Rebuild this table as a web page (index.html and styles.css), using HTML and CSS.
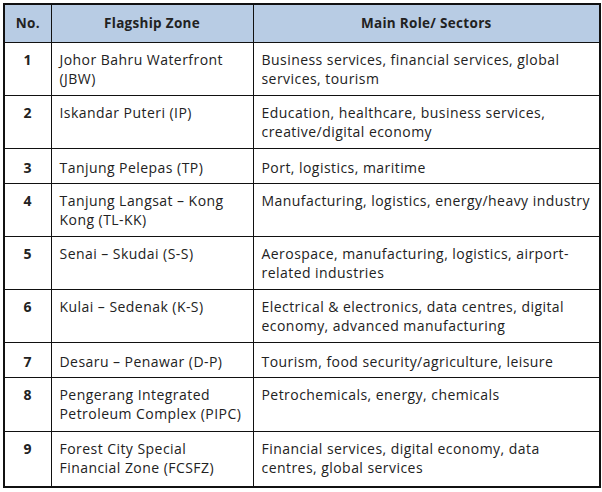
FILE: index.html
```html
<!DOCTYPE html>
<html lang="en">
<head>
<meta charset="utf-8">
<title>Flagship Zones</title>
<link rel="stylesheet" href="styles.css">
</head>
<body>
<table class="zones">
  <colgroup>
    <col class="c-no">
    <col class="c-zone">
    <col class="c-role">
  </colgroup>
  <thead>
    <tr>
      <th>No.</th>
      <th>Flagship Zone</th>
      <th>Main Role/ Sectors</th>
    </tr>
  </thead>
  <tbody>
    <tr><td class="no">1</td><td>Johor Bahru Waterfront (JBW)</td><td>Business services, financial services, global services, tourism</td></tr>
    <tr><td class="no">2</td><td>Iskandar Puteri (IP)</td><td>Education, healthcare, business services, creative/digital economy</td></tr>
    <tr class="one"><td class="no">3</td><td>Tanjung Pelepas (TP)</td><td>Port, logistics, maritime</td></tr>
    <tr><td class="no">4</td><td>Tanjung Langsat – Kong Kong (TL-KK)</td><td>Manufacturing, logistics, energy/heavy industry</td></tr>
    <tr><td class="no">5</td><td>Senai – Skudai (S-S)</td><td>Aerospace, manufacturing, logistics, airport-related industries</td></tr>
    <tr><td class="no">6</td><td>Kulai – Sedenak (K-S)</td><td>Electrical &amp; electronics, data centres, digital economy, advanced manufacturing</td></tr>
    <tr class="one"><td class="no">7</td><td>Desaru – Penawar (D-P)</td><td>Tourism, food security/agriculture, leisure</td></tr>
    <tr class="eight"><td class="no">8</td><td>Pengerang Integrated Petroleum Complex (PIPC)</td><td>Petrochemicals, energy, chemicals</td></tr>
    <tr class="last"><td class="no">9</td><td>Forest City Special Financial Zone (FCSFZ)</td><td>Financial services, digital economy, data centres, global services</td></tr>
  </tbody>
</table>
</body>
</html>
```

FILE: styles.css
```css
html, body {
  margin: 0;
  padding: 0;
  background: #ffffff;
}

body {
  padding: 3px 0 0 3px;
  font-family: "Open Sans", "DejaVu Sans", sans-serif;
  color: #222222;
}

.zones {
  border-collapse: collapse;
  width: 596px;
  table-layout: fixed;
  border: 2px solid #111;
  font-size: 14px;
  line-height: 19px;
  letter-spacing: 0.45px;
}

.c-no { width: 47px; }
.c-zone { width: 202px; }
.c-role { width: 347px; }

.zones th,
.zones td {
  border: 1px solid #111;
  padding: 7px 10px 7px 8px;
  text-align: left;
  vertical-align: top;
}

.zones td:last-child {
  padding-right: 3px;
}

.zones thead th {
  background: #b8cce4;
  font-weight: 700;
  font-size: 13.5px;
  letter-spacing: 0.3px;
  text-align: center;
  padding: 9px 4px 9px 4px;
}

.zones td.no {
  font-weight: 700;
  text-align: center;
  padding-left: 2px;
  padding-right: 2px;
}

.zones tr.one td {
  padding-top: 9px;
  padding-bottom: 6px;
}

.zones tr.eight td {
  padding-bottom: 8px;
}

.zones tr.last td {
  padding-bottom: 9px;
}
```
